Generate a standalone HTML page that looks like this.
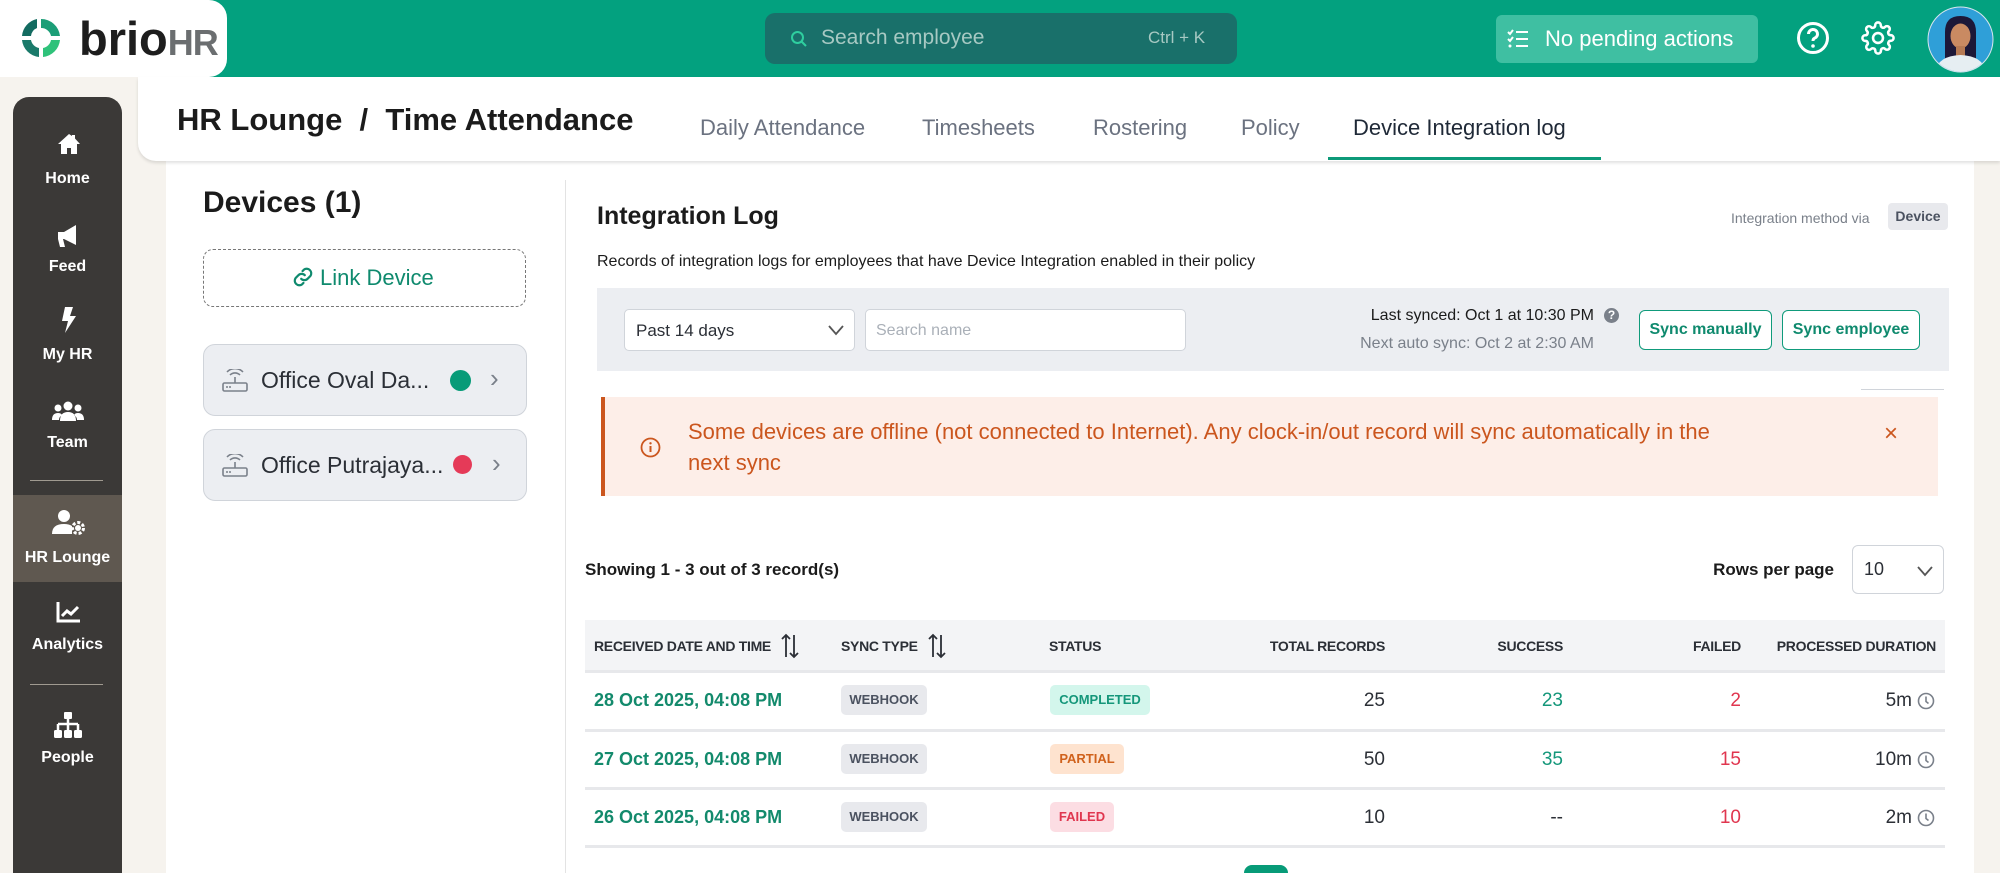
<!DOCTYPE html>
<html><head><meta charset="utf-8"><style>
*{margin:0;padding:0;box-sizing:border-box}
html{width:2000px;height:873px;overflow:hidden}
body{width:2000px;height:873px;overflow:hidden;background:#f6f3ee;font-family:"Liberation Sans",Arial,sans-serif;position:relative;color:#1f2328}
.a{position:absolute}
.top{left:0;top:0;width:2000px;height:77px;background:#03a17f}
.logo{left:0;top:0;width:227px;height:77px;background:#fff;border-radius:0 18px 18px 0}
.side{left:13px;top:97px;width:109px;height:776px;background:#3b3937;border-radius:16px 16px 0 0}
.si{position:absolute;left:0;width:109px;text-align:center;color:#fff;font-size:16px;font-weight:bold}
.hdr{left:138px;top:77px;width:1862px;height:84px;background:#fff;border-radius:0 0 0 18px;box-shadow:0 2px 3px rgba(0,0,0,.12)}
.tab{top:115px;font-size:22px;color:#6b7280;font-weight:500}
.panel{left:166px;top:161px;width:1808px;height:712px;background:#fff}
.card{left:203px;width:324px;height:72px;background:#eceef2;border:1.5px solid #d0d4da;border-radius:12px}
.card span{position:absolute;left:57px;top:22px;font-size:23px;color:#2b2f36}
.btn{top:310px;height:40px;border:1.5px solid #0f9b7b;border-radius:6px;background:#fff;color:#0f8a6e;font-size:16px;font-weight:bold;text-align:center;line-height:37px}
.th{top:638px;font-size:14px;font-weight:bold;color:#2b2f36;letter-spacing:-0.3px}
.r{text-align:right}
.date{font-size:18px;font-weight:bold;color:#138a6c;left:594px}
.wb{left:841px;width:86px;height:30px;background:#e8e9ed;border-radius:5px;color:#4b5260;font-size:13px;font-weight:bold;text-align:center;line-height:30px}
.st{left:1050px;height:30px;border-radius:5px;font-size:13px;font-weight:bold;text-align:center;line-height:30px}
.num{font-size:19px;text-align:right;width:100px}
.sep{left:585px;width:1360px;height:3px;background:#e7e8eb}
</style></head><body>
<div class="a top"></div>
<div class="a logo">
<svg class="a" style="left:18px;top:15px" width="46" height="46" viewBox="0 0 46 46">
<path d="M23 4 A19 19 0 0 1 42 21 L33 21 A10 10 0 0 0 23 13 Z" fill="#1b9e77"/>
<path d="M42 25 A19 19 0 0 1 25 42 L25 33 A10 10 0 0 0 33 25 Z" fill="#2fc27a"/>
<path d="M21 42 A19 19 0 0 1 4 25 L13 25 A10 10 0 0 0 21 33 Z" fill="#1a7a6a"/>
<path d="M4 21 A19 19 0 0 1 19 4 L19 13 A10 10 0 0 0 13 21 Z" fill="#136b60"/>
</svg>
<div class="a" style="left:79px;top:11px;font-size:47px;font-weight:bold;color:#1d1d1d;letter-spacing:0">brio<span style="color:#6b6e70;font-size:36px;letter-spacing:-1px">HR</span></div>
</div>
<div class="a" style="left:765px;top:13px;width:472px;height:51px;background:#19706a;border-radius:10px"></div>
<svg class="a" style="left:790px;top:30px" width="18" height="18" viewBox="0 0 18 18"><circle cx="7.5" cy="7.5" r="5.5" stroke="#2fcf9f" stroke-width="2" fill="none"/><path d="M11.5 11.5 L16 16" stroke="#2fcf9f" stroke-width="2"/></svg>
<div class="a" style="left:821px;top:26px;font-size:21px;color:#a7c9c3">Search employee</div>
<div class="a" style="left:1148px;top:28px;font-size:17px;color:#a7c9c3">Ctrl + K</div>
<div class="a" style="left:1496px;top:15px;width:262px;height:48px;background:#3fbfa2;border-radius:6px"></div>
<svg class="a" style="left:1507px;top:29px" width="22" height="20" viewBox="0 0 22 20"><g stroke="#fff" stroke-width="2" fill="none"><path d="M1 3l2 2 3-4M1 10l2 2 3-4"/><path d="M9 3h12M9 10h12M9 17h12"/></g><circle cx="3" cy="17" r="1.5" fill="#fff"/></svg>
<div class="a" style="left:1545px;top:26px;font-size:22px;color:#fff;font-weight:500">No pending actions</div>
<svg class="a" style="left:1796px;top:21px" width="34" height="34" viewBox="0 0 34 34"><circle cx="17" cy="17" r="14.5" stroke="#fff" stroke-width="3" fill="none"/><path d="M12.5 13a4.5 4.5 0 1 1 6 4.2c-1.2.5-1.5 1.2-1.5 2.8" stroke="#fff" stroke-width="3" fill="none"/><circle cx="17" cy="25" r="1.8" fill="#fff"/></svg>
<svg class="a" style="left:1861px;top:21px" width="34" height="34" viewBox="0 0 24 24"><path d="M12 15.5a3.5 3.5 0 1 0 0-7 3.5 3.5 0 0 0 0 7z M19.4 15a1.650 1.65 0 0 0 .33 1.82l.06.06a2 2 0 1 1-2.830 2.83l-.06-.06a1.65 1.65 0 0 0-1.82-.33 1.65 1.65 0 0 0-1 1.51V21a2 2 0 1 1-4 0v-.09A1.65 1.65 0 0 0 9 19.4a1.65 1.65 0 0 0-1.82.33l-.06.06a2 2 0 1 1-2.83-2.83l.06-.06a1.65 1.65 0 0 0 .33-1.82 1.65 1.65 0 0 0-1.51-1H3a2 2 0 1 1 0-4h.09A1.65 1.65 0 0 0 4.6 9a1.65 1.65 0 0 0-.33-1.82l-.06-.06a2 2 0 1 1 2.83-2.830l.06.06a1.65 1.65 0 0 0 1.82.33H9a1.65 1.65 0 0 0 1-1.51V3a2 2 0 1 1 4 0v.09a1.65 1.65 0 0 0 1 1.51 1.65 1.65 0 0 0 1.82-.33l.06-.06a2 2 0 1 1 2.83 2.83l-.06.06a1.65 1.65 0 0 0-.33 1.82V9a1.65 1.65 0 0 0 1.51 1H21a2 2 0 1 1 0 4h-.09a1.65 1.65 0 0 0-1.51 1z" stroke="#fff" stroke-width="1.8" fill="none"/></svg>
<svg class="a" style="left:1927px;top:6px" width="67" height="67" viewBox="0 0 67 67"><defs><clipPath id="c"><circle cx="33.5" cy="33.5" r="32"/></clipPath></defs><circle cx="33.5" cy="33.5" r="33" fill="#d8e6ee"/><g clip-path="url(#c)"><rect width="67" height="67" fill="#2f9fd8"/><path d="M18 60 V26 Q18 10 33.5 10 Q49 10 49 26 V60 Z" fill="#1c1838"/><ellipse cx="33.5" cy="30" rx="10" ry="12.5" fill="#c98a62"/><rect x="29" y="40" width="9" height="10" fill="#b67a54"/><path d="M8 67 Q10 50 33.5 49 Q57 50 59 67 Z" fill="#e6eef2"/></g></svg>

<div class="a side">
 <svg class="si" style="top:36px;left:44px;width:24px" width="24" height="22" viewBox="0 0 24 22"><path d="M12 1 L1 11 h3 v10 h6 v-6 h4 v6 h6 V11 h3 L18 5.5 V2 h-3 v1z" fill="#fff"/></svg>
 <div class="si" style="top:73px">Home</div>
 <svg class="si" style="top:127px;left:43px;width:26px" width="26" height="24" viewBox="0 0 26 24"><path d="M2 8 h6 l12-7 v20 l-12-6 h-1 l2 8 h-5 l-2-8 H2z" fill="#fff"/></svg>
 <div class="si" style="top:161px">Feed</div>
 <svg class="si" style="top:210px;left:47px;width:16px" width="16" height="26" viewBox="0 0 16 26"><path d="M5 0 h8 l-3 9 h6 L5 26 l3-12 H2z" fill="#fff"/></svg>
 <div class="si" style="top:249px">My HR</div>
 <svg class="si" style="top:304px;left:39px;width:32px" width="32" height="20" viewBox="0 0 32 20"><circle cx="16" cy="5" r="4.5" fill="#fff"/><circle cx="6" cy="7" r="3.5" fill="#fff"/><circle cx="26" cy="7" r="3.5" fill="#fff"/><path d="M8 20 q0-9 8-9 q8 0 8 9z M0 19 q0-7 6-7 q3 0 4 2 q-3 2-3 5z M32 19 q0-7-6-7 q-3 0-4 2 q3 2 3 5z" fill="#fff"/></svg>
 <div class="si" style="top:337px">Team</div>
 <div class="a" style="left:17px;top:383px;width:73px;height:1px;background:#a09a90"></div>
 <div class="a" style="left:0;top:398px;width:109px;height:87px;background:#5f5850"></div>
 <svg class="si" style="top:412px;left:39px;width:34px" width="34" height="26" viewBox="0 0 34 26"><circle cx="12" cy="7" r="6" fill="#fff"/><path d="M0 25 q0-10 12-10 q5 0 8 2 v8z" fill="#fff"/><circle cx="26" cy="19" r="5.5" fill="none" stroke="#fff" stroke-width="3" stroke-dasharray="3 2"/><circle cx="26" cy="19" r="3" fill="#fff"/></svg>
 <div class="si" style="top:452px">HR Lounge</div>
 <svg class="si" style="top:504px;left:43px;width:25px" width="25" height="22" viewBox="0 0 25 22"><path d="M2 1 V20 H24" stroke="#fff" stroke-width="3" fill="none"/><path d="M6 15 l5-5 4 3 7-7" stroke="#fff" stroke-width="3" fill="none"/></svg>
 <div class="si" style="top:539px">Analytics</div>
 <div class="a" style="left:17px;top:587px;width:73px;height:1px;background:#a09a90"></div>
 <svg class="si" style="top:615px;left:41px;width:28px" width="28" height="26" viewBox="0 0 28 26"><rect x="10" y="0" width="8" height="7" rx="1" fill="#fff"/><path d="M14 7 v5 M4 12 h20 M4 12 v6 M14 12 v6 M24 12 v6" stroke="#fff" stroke-width="2.5" fill="none"/><rect x="0" y="18" width="8" height="8" rx="1.5" fill="#fff"/><rect x="10" y="18" width="8" height="8" rx="1.5" fill="#fff"/><rect x="20" y="18" width="8" height="8" rx="1.5" fill="#fff"/></svg>
 <div class="si" style="top:652px">People</div>
</div>

<div class="a panel"></div>
<div class="a" style="left:565px;top:180px;width:1px;height:693px;background:#e3e3e3"></div>
<div class="a hdr"></div>
<div class="a" style="left:177px;top:102px;font-size:31px;font-weight:bold;color:#1b1b1b">HR Lounge &nbsp;/ &nbsp;Time Attendance</div>
<div class="a tab" style="left:700px">Daily Attendance</div>
<div class="a tab" style="left:922px">Timesheets</div>
<div class="a tab" style="left:1093px">Rostering</div>
<div class="a tab" style="left:1241px">Policy</div>
<div class="a tab" style="left:1353px;color:#1f2937">Device Integration log</div>
<div class="a" style="left:1328px;top:157px;width:273px;height:3px;background:#0d9a79"></div>

<div class="a" style="left:203px;top:186px;font-size:30px;font-weight:bold;color:#1b1b1b">Devices (1)</div>
<div class="a" style="left:203px;top:249px;width:323px;height:58px;border:1.5px dashed #777;border-radius:10px"></div>
<svg class="a" style="left:292px;top:266px" width="22" height="22" viewBox="0 0 24 24"><path d="M10 14a5 5 0 0 0 7 0l3-3a5 5 0 0 0-7-7l-1.5 1.5M14 10a5 5 0 0 0-7 0l-3 3a5 5 0 0 0 7 7l1.5-1.5" stroke="#0f8a6e" stroke-width="2.4" fill="none" stroke-linecap="round"/></svg>
<div class="a" style="left:320px;top:265px;font-size:22px;color:#0f8a6e;font-weight:500">Link Device</div>
<div class="a card" style="top:344px"><svg class="a" style="left:18px;top:24px" width="26" height="24" viewBox="0 0 26 24"><g stroke="#7a808a" stroke-width="1.6" fill="none"><rect x="1" y="14" width="24" height="8" rx="1.5"/><path d="M13 14V8M8 6a7 7 0 0 1 10 0M5 3a11 11 0 0 1 16 0"/></g><circle cx="5" cy="18" r="1" fill="#7a808a"/><circle cx="8" cy="18" r="1" fill="#7a808a"/></svg><span>Office Oval Da...</span><div class="a" style="left:246px;top:25px;width:21px;height:21px;border-radius:50%;background:#079b78"></div><div class="a" style="left:286px;top:18px;font-size:26px;color:#7a808a">›</div></div>
<div class="a card" style="top:429px"><svg class="a" style="left:18px;top:24px" width="26" height="24" viewBox="0 0 26 24"><g stroke="#7a808a" stroke-width="1.6" fill="none"><rect x="1" y="14" width="24" height="8" rx="1.5"/><path d="M13 14V8M8 6a7 7 0 0 1 10 0M5 3a11 11 0 0 1 16 0"/></g><circle cx="5" cy="18" r="1" fill="#7a808a"/><circle cx="8" cy="18" r="1" fill="#7a808a"/></svg><span>Office Putrajaya...</span><div class="a" style="left:249px;top:25px;width:19px;height:19px;border-radius:50%;background:#e53a58"></div><div class="a" style="left:288px;top:18px;font-size:26px;color:#7a808a">›</div></div>

<div class="a" style="left:597px;top:202px;font-size:25px;font-weight:bold;color:#1b1b1b">Integration Log</div>
<div class="a" style="left:1731px;top:210px;font-size:14px;color:#7a808a">Integration method via</div>
<div class="a" style="left:1888px;top:203px;width:60px;height:27px;background:#e8e9ed;border-radius:4px;font-size:14px;font-weight:bold;color:#4b5260;text-align:center;line-height:27px">Device</div>
<div class="a" style="left:597px;top:253px;font-size:16px;color:#1b1b1b">Records of integration logs for employees that have Device Integration enabled in their policy</div>
<div class="a" style="left:597px;top:288px;width:1352px;height:83px;background:#eceef2"></div>
<div class="a" style="left:624px;top:309px;width:231px;height:42px;background:#fff;border:1px solid #d0d4da;border-radius:5px"></div>
<div class="a" style="left:636px;top:321px;font-size:17px;color:#2b2f36">Past 14 days</div>
<svg class="a" style="left:828px;top:324px" width="16" height="12" viewBox="0 0 16 12"><path d="M1 2l7 8 7-8" stroke="#555" stroke-width="1.8" fill="none"/></svg>
<div class="a" style="left:865px;top:309px;width:321px;height:42px;background:#fff;border:1px solid #d0d4da;border-radius:5px"></div>
<div class="a" style="left:876px;top:322px;font-size:16px;color:#aab0b8">Search name</div>
<div class="a" style="left:1290px;top:307px;width:304px;font-size:16px;color:#1b1b1b;text-align:right">Last synced: Oct 1 at 10:30 PM</div>
<div class="a" style="left:1604px;top:308px;width:15px;height:15px;border-radius:50%;background:#7a808a;color:#fff;font-size:12px;font-weight:bold;text-align:center;line-height:15px">?</div>
<div class="a" style="left:1290px;top:335px;width:304px;font-size:16px;color:#7a808a;text-align:right">Next auto sync: Oct 2 at 2:30 AM</div>
<div class="a btn" style="left:1639px;width:133px">Sync manually</div>
<div class="a btn" style="left:1782px;width:138px">Sync employee</div>
<div class="a" style="left:1861px;top:389px;width:83px;height:1px;background:#d0d4da"></div>
<div class="a" style="left:601px;top:397px;width:1337px;height:99px;background:#fdeee8;border-left:4px solid #cb561e"></div>
<svg class="a" style="left:640px;top:437px" width="21" height="21" viewBox="0 0 21 21"><circle cx="10.5" cy="10.5" r="9" stroke="#cb561e" stroke-width="1.8" fill="none"/><path d="M10.5 9v6" stroke="#cb561e" stroke-width="2"/><circle cx="10.5" cy="6.3" r="1.2" fill="#cb561e"/></svg>
<div class="a" style="left:688px;top:416px;width:1045px;font-size:22px;line-height:31px;color:#cb561e;font-weight:500">Some devices are offline (not connected to Internet). Any clock-in/out record will sync automatically in the next sync</div>
<div class="a" style="left:1884px;top:420px;font-size:24px;color:#cb561e">×</div>

<div class="a" style="left:585px;top:560px;font-size:17px;font-weight:bold;color:#1b1b1b">Showing 1 - 3 out of 3 record(s)</div>
<div class="a" style="left:1700px;top:560px;width:134px;text-align:right;font-size:17px;font-weight:bold;color:#1b1b1b">Rows per page</div>
<div class="a" style="left:1852px;top:545px;width:92px;height:49px;border:1px solid #d0d4da;border-radius:6px;background:#fff"></div>
<div class="a" style="left:1864px;top:559px;font-size:18px;color:#2b2f36">10</div>
<svg class="a" style="left:1917px;top:565px" width="16" height="12" viewBox="0 0 16 12"><path d="M1 2l7 8 7-8" stroke="#555" stroke-width="1.8" fill="none"/></svg>

<div class="a" style="left:585px;top:620px;width:1360px;height:51px;background:#f3f4f6"></div>
<div class="a th" style="left:594px">RECEIVED DATE AND TIME</div>
<svg class="a" style="left:781px;top:633px" width="18" height="26" viewBox="0 0 18 26"><g stroke="#2b2f36" stroke-width="1.8" fill="none"><path d="M5 24V2M1 6l4-4 4 4"/><path d="M13 2v22M9 20l4 4 4-4"/></g></svg>
<div class="a th" style="left:841px">SYNC TYPE</div>
<svg class="a" style="left:928px;top:633px" width="18" height="26" viewBox="0 0 18 26"><g stroke="#2b2f36" stroke-width="1.8" fill="none"><path d="M5 24V2M1 6l4-4 4 4"/><path d="M13 2v22M9 20l4 4 4-4"/></g></svg>
<div class="a th" style="left:1049px">STATUS</div>
<div class="a th r" style="left:1185px;width:200px">TOTAL RECORDS</div>
<div class="a th r" style="left:1463px;width:100px">SUCCESS</div>
<div class="a th r" style="left:1641px;width:100px">FAILED</div>
<div class="a th r" style="left:1736px;width:200px">PROCESSED DURATION</div>
<div class="a sep" style="top:670px"></div>

<div class="a date" style="top:690px">28 Oct 2025, 04:08 PM</div>
<div class="a wb" style="top:685px">WEBHOOK</div>
<div class="a st" style="top:685px;width:100px;background:#d3f6ec;color:#14977a">COMPLETED</div>
<div class="a num" style="left:1285px;top:690px;color:#2b2f36">25</div>
<div class="a num" style="left:1463px;top:690px;color:#14977a">23</div>
<div class="a num" style="left:1641px;top:690px;color:#e0364f">2</div>
<div class="a num" style="left:1812px;top:690px;color:#2b2f36">5m</div>
<div class="a sep" style="top:729px"></div>

<div class="a date" style="top:749px">27 Oct 2025, 04:08 PM</div>
<div class="a wb" style="top:744px">WEBHOOK</div>
<div class="a st" style="top:744px;width:74px;background:#fee3cf;color:#d0621c">PARTIAL</div>
<div class="a num" style="left:1285px;top:749px;color:#2b2f36">50</div>
<div class="a num" style="left:1463px;top:749px;color:#14977a">35</div>
<div class="a num" style="left:1641px;top:749px;color:#e0364f">15</div>
<div class="a num" style="left:1812px;top:749px;color:#2b2f36">10m</div>
<div class="a sep" style="top:787px"></div>

<div class="a date" style="top:807px">26 Oct 2025, 04:08 PM</div>
<div class="a wb" style="top:802px">WEBHOOK</div>
<div class="a st" style="top:802px;width:64px;background:#fcdde3;color:#e0364f">FAILED</div>
<div class="a num" style="left:1285px;top:807px;color:#2b2f36">10</div>
<div class="a num" style="left:1463px;top:807px;color:#2b2f36">--</div>
<div class="a num" style="left:1641px;top:807px;color:#e0364f">10</div>
<div class="a num" style="left:1812px;top:807px;color:#2b2f36">2m</div>
<div class="a sep" style="top:845px"></div>

<svg class="a" style="left:1916px;top:691px" width="20" height="140" viewBox="0 0 20 140"><g stroke="#7a808a" stroke-width="1.6" fill="none"><circle cx="10" cy="10" r="7.5"/><path d="M10 5.5v5l2.5 2"/><circle cx="10" cy="69" r="7.5"/><path d="M10 64.5v5l2.5 2"/><circle cx="10" cy="127" r="7.5"/><path d="M10 122.5v5l2.5 2"/></g></svg>
<div class="a" style="left:1244px;top:865px;width:44px;height:8px;border-radius:8px 8px 0 0;background:#079b78"></div>
</body></html>
